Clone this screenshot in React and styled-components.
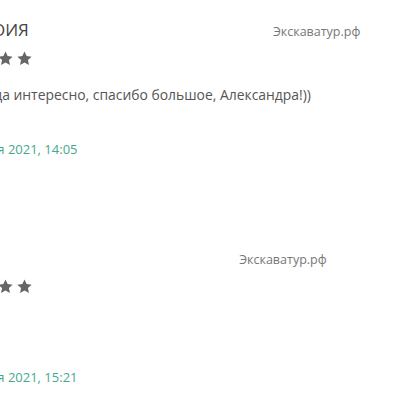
import React from "react";
import styled, { createGlobalStyle } from "styled-components";

const Global = createGlobalStyle`
  html, body { margin: 0; padding: 0; background: #fff; overflow: hidden; }
  body { font-family: "Open Sans", "Liberation Sans", sans-serif; }
`;

const Page = styled.div`
  width: 400px;
  height: 400px;
  overflow: hidden;
`;

const List = styled.div`
  margin-left: -59px;
  padding-top: 18px;
  display: flex;
  flex-direction: column;
`;

const Review = styled.div`
  height: 228px;
  display: flex;
  flex-direction: column;
`;

const Header = styled.div`
  display: flex;
  align-items: baseline;
  gap: 244px;
  height: 24px;
`;

const Name = styled.span`
  font-size: 17px;
  color: #444;
  text-transform: uppercase;
  white-space: nowrap;
`;

const Site = styled.span`
  font-size: 12.5px;
  color: #777;
  white-space: nowrap;
`;

const Stars = styled.div`
  display: flex;
  gap: 4px;
  margin-top: 9px;
  height: 15px;
`;

const Text = styled.div`
  margin-top: 19px;
  font-size: 13.9px;
  color: #555;
  height: 22px;
  white-space: nowrap;
`;

const DateLine = styled.div`
  margin-top: 33px;
  font-size: 13px;
  color: #47a78c;
  white-space: nowrap;
`;

const Star = () => (
  <svg width="15" height="15" viewBox="0 0 24 24">
    <path
      fill="#666"
      d="M12 0.8l3.4 7.3 8 .9-5.9 5.5 1.6 7.9L12 18.4l-7.1 4 1.6-7.9L.6 9l8-.9z"
    />
  </svg>
);

const reviews = [
  {
    name: "Анна Оия",
    text: "Тут всегда интересно, спасибо большое, Александра!))",
    date: "21 января 2021, 14:05",
  },
  { name: "Елена", text: "", date: "29 января 2021, 15:21" },
];

export default function App() {
  return (
    <Page>
      <Global />
      <List>
        {reviews.map((r, i) => (
          <Review key={i}>
            <Header>
              <Name>{r.name}</Name>
              <Site>Экскаватур.рф</Site>
            </Header>
            <Stars>
              {[0, 1, 2, 3, 4].map((s) => (
                <Star key={s} />
              ))}
            </Stars>
            <Text>{r.text}</Text>
            <DateLine>{r.date}</DateLine>
          </Review>
        ))}
      </List>
    </Page>
  );
}
